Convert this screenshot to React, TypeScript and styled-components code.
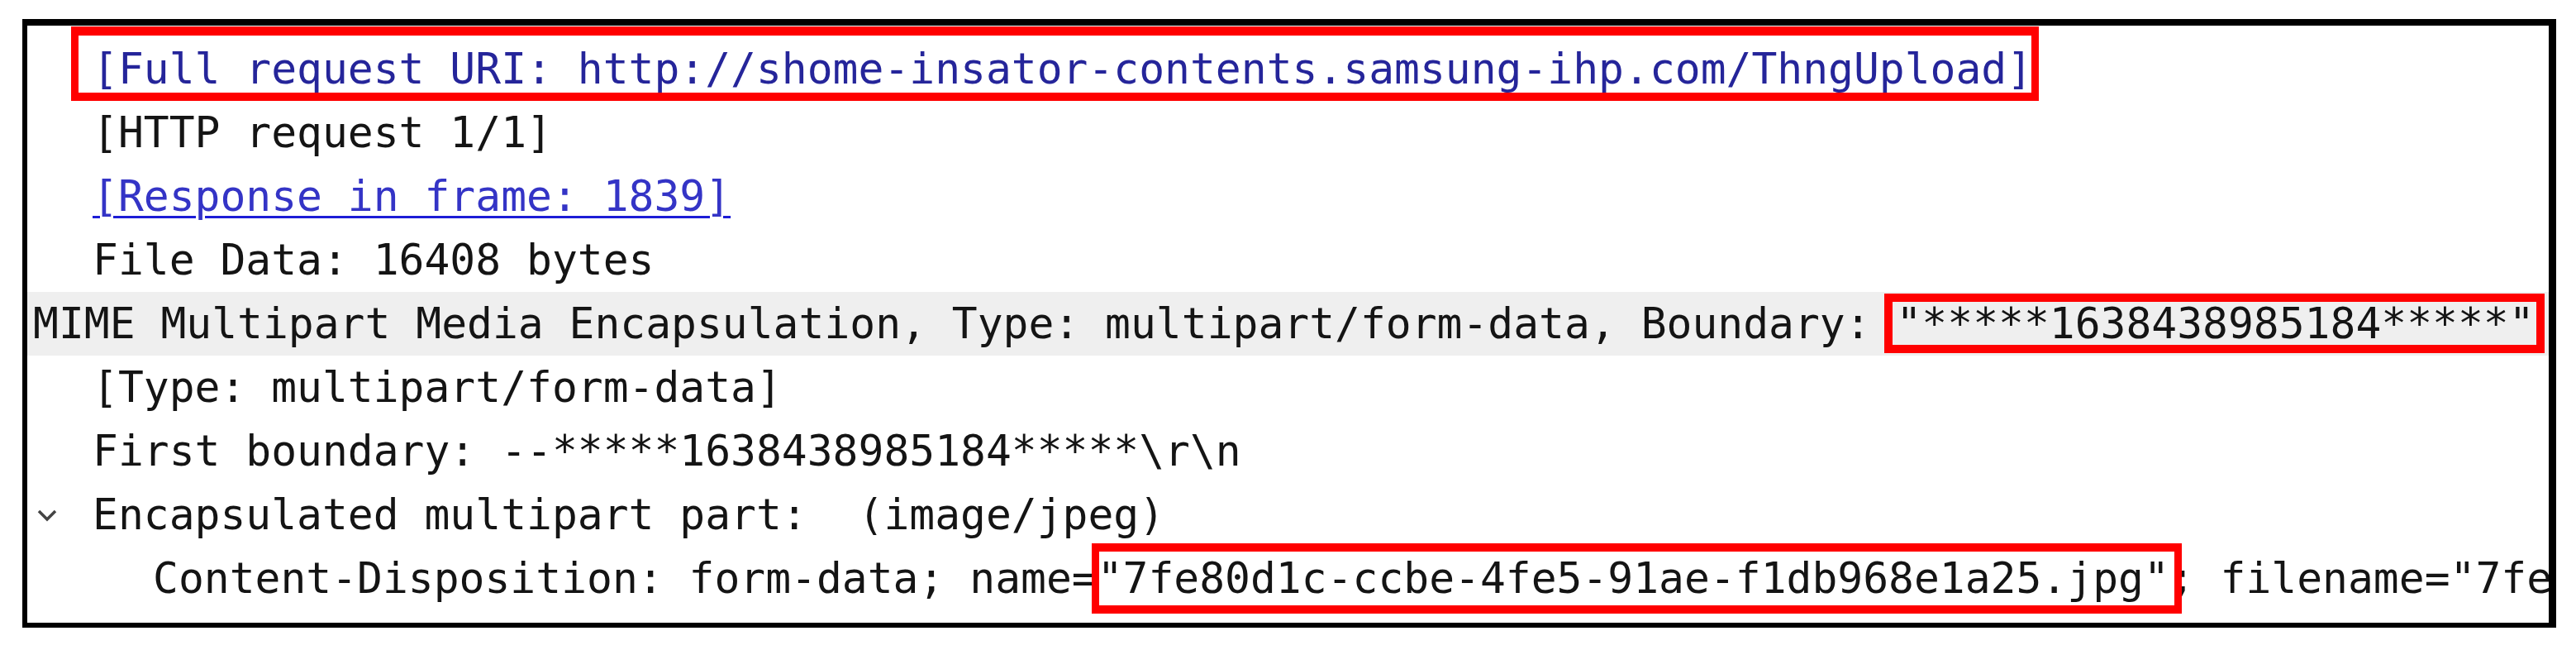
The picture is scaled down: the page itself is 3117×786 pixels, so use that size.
import * as React from "react";
import styled, { createGlobalStyle } from "styled-components";

const GlobalStyle = createGlobalStyle`
  html, body {
    margin: 0;
    padding: 0;
    background: #ffffff;
  }
`;

type Inset = { top: number; right: number; bottom: number; left: number };

const Frame = styled.div`
  box-sizing: border-box;
  width: 3066px;
  height: 736px;
  margin: 23px 0 0 27px;
  border-style: solid;
  border-color: #000;
  border-width: 8px 9px 6px 6px;
  padding-top: 14px;
  overflow: hidden;
  background: #fff;
  font-family: "DejaVu Sans Mono", "Liberation Mono", monospace;
  font-size: 51.3px;
  color: #141414;
`;

const Row = styled.div<{ $indent: number; $selected?: boolean }>`
  display: flex;
  align-items: center;
  height: 77px;
  line-height: 77px;
  padding-left: ${(p) => p.$indent}px;
  background: ${(p) => (p.$selected ? "#efefef" : "transparent")};
  white-space: pre;
`;

const Twisty = styled.span`
  display: flex;
  align-items: center;
  flex: none;
  width: 74px;
  margin-left: -74px;
  padding-left: 6px;
  box-sizing: border-box;
`;

const Label = styled.span<{ $link?: "dark" | "light" }>`
  display: block;
  height: 77px;
  color: ${(p) =>
    p.$link === "dark" ? "#25259a" : p.$link === "light" ? "#3434c6" : "inherit"};
  text-decoration: ${(p) => (p.$link ? "underline" : "none")};
  text-decoration-color: ${(p) => (p.$link ? "#1d1dd6" : "inherit")};
  text-decoration-thickness: 3px;
  text-underline-offset: 6px;
`;

const Marked = styled.span<{ $inset: Inset; $width: string }>`
  position: relative;
  display: inline-block;
  vertical-align: top;
  height: 77px;

  &::after {
    content: "";
    position: absolute;
    top: ${(p) => p.$inset.top}px;
    right: ${(p) => p.$inset.right}px;
    bottom: ${(p) => p.$inset.bottom}px;
    left: ${(p) => p.$inset.left}px;
    border: solid #ff0000;
    border-width: ${(p) => p.$width};
    pointer-events: none;
  }
`;

const Chevron = () => (
  <svg width="26" height="16" viewBox="0 0 26 16">
    <polyline
      points="3,3 13,13 23,3"
      fill="none"
      stroke="#444"
      strokeWidth="3.5"
    />
  </svg>
);

const INDENT = [7, 79, 152];

export default function App() {
  return (
    <>
      <GlobalStyle />
      <Frame>
        <Row $indent={INDENT[1]}>
          <Label $link="dark">
            <Marked
              $inset={{ top: -13, right: -8, bottom: 0, left: -26 }}
              $width="11px 9px 10px 9px"
            >
              [Full request URI: http://shome-insator-contents.samsung-ihp.com/ThngUpload]
            </Marked>
          </Label>
        </Row>
        <Row $indent={INDENT[1]}>
          <Label>[HTTP request 1/1]</Label>
        </Row>
        <Row $indent={INDENT[1]}>
          <Label $link="light">[Response in frame: 1839]</Label>
        </Row>
        <Row $indent={INDENT[1]}>
          <Label>File Data: 16408 bytes</Label>
        </Row>
        <Row $indent={INDENT[0]} $selected>
          <Label>
            {"MIME Multipart Media Encapsulation, Type: multipart/form-data, Boundary: "}
            <Marked
              $inset={{ top: 2, right: -12, bottom: 3, left: -14 }}
              $width="10px 10px 10px 10px"
            >
              "*****1638438985184*****"
            </Marked>
          </Label>
        </Row>
        <Row $indent={INDENT[1]}>
          <Label>[Type: multipart/form-data]</Label>
        </Row>
        <Row $indent={INDENT[1]}>
          <Label>{"First boundary: --*****1638438985184*****\\r\\n"}</Label>
        </Row>
        <Row $indent={INDENT[1]}>
          <Twisty>
            <Chevron />
          </Twisty>
          <Label>{"Encapsulated multipart part:  (image/jpeg)"}</Label>
        </Row>
        <Row $indent={INDENT[2]}>
          <Label>
            {"Content-Disposition: form-data; name="}
            <Marked
              $inset={{ top: -4, right: -15, bottom: -4, left: -7 }}
              $width="10px 9px 10px 9px"
            >
              "7fe80d1c-ccbe-4fe5-91ae-f1db968e1a25.jpg"
            </Marked>
            {'; filename="7fe80d1c-ccbe-4fe5-91ae-f1db968e1a25.jpg"'}
          </Label>
        </Row>
      </Frame>
    </>
  );
}
